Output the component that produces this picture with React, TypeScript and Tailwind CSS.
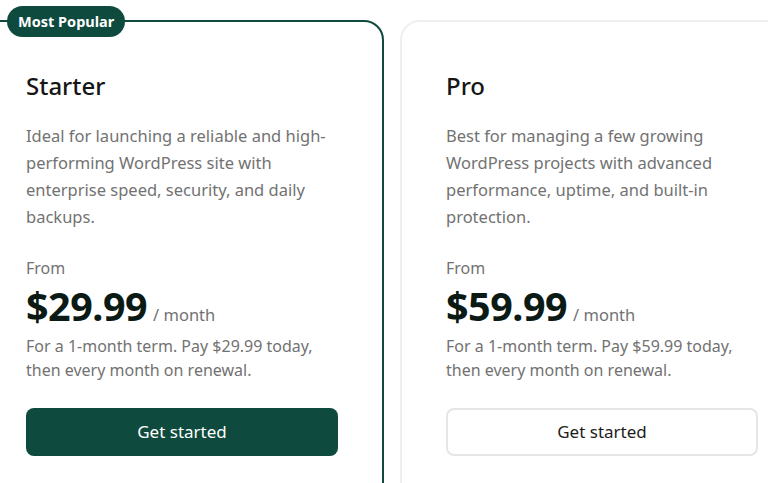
const plans = [
  {
    name: 'Starter',
    desc: 'Ideal for launching a reliable and high-performing WordPress site with enterprise speed, security, and daily backups.',
    price: '$29.99',
    popular: true,
  },
  {
    name: 'Pro',
    desc: 'Best for managing a few growing WordPress projects with advanced performance, uptime, and built-in protection.',
    price: '$59.99',
    popular: false,
  },
]

export default function App() {
  return (
    <div
      className="w-[768px] h-[483px] overflow-hidden bg-white"
      style={{ fontFamily: "'Noto Sans', 'Open Sans', sans-serif" }}
    >
      <div className="flex gap-4 ml-[-20px] pt-5">
        {plans.map((p) => (
          <div
            key={p.name}
            className={
              p.popular
                ? 'relative shrink-0 w-[404px] h-[520px] rounded-[20px] border-2 border-[#0f4a3e] bg-white pl-[44px] pr-[44px] pt-[48px]'
                : 'relative shrink-0 w-[404px] h-[520px] rounded-[20px] border-2 border-[#efefef] bg-white pl-[44px] pr-[44px] pt-[48px]'
            }
          >
            {p.popular && (
              <div className="absolute left-[25px] top-[-16px] h-[31px] px-[11px] rounded-full bg-[#0f4a3e] text-white text-[14.5px] font-bold leading-[31px]">
                Most Popular
              </div>
            )}
            <div className="text-[24px] leading-[32px] font-medium text-[#161616]">{p.name}</div>
            <p className="mt-[20px] text-[16.5px] leading-[27px] text-[#727272]">{p.desc}</p>
            <div className="mt-[26px] text-[16px] leading-[24px] text-[#727272]">From</div>
            <div className="mt-[2px] flex items-baseline gap-[6px] h-[48px]">
              <span className="text-[39.5px] leading-[48px] font-bold text-[#0c1a15] tracking-[-0.5px]">{p.price}</span>
              <span className="text-[16.5px] text-[#727272]">/ month</span>
            </div>
            <p className="mt-[4px] text-[16px] leading-[24px] text-[#727272]">
              For a 1-month term. Pay {p.price} today, then every month on renewal.
            </p>
            <button
              className={
                p.popular
                  ? 'mt-[26px] w-[312px] h-[48px] rounded-[8px] bg-[#0f4a3e] text-white text-[17px]'
                  : 'mt-[26px] w-[312px] h-[48px] rounded-[8px] border-2 border-[#e6e6e6] bg-white text-[#1c1c1c] text-[17px]'
              }
            >
              Get started
            </button>
          </div>
        ))}
      </div>
    </div>
  )
}
